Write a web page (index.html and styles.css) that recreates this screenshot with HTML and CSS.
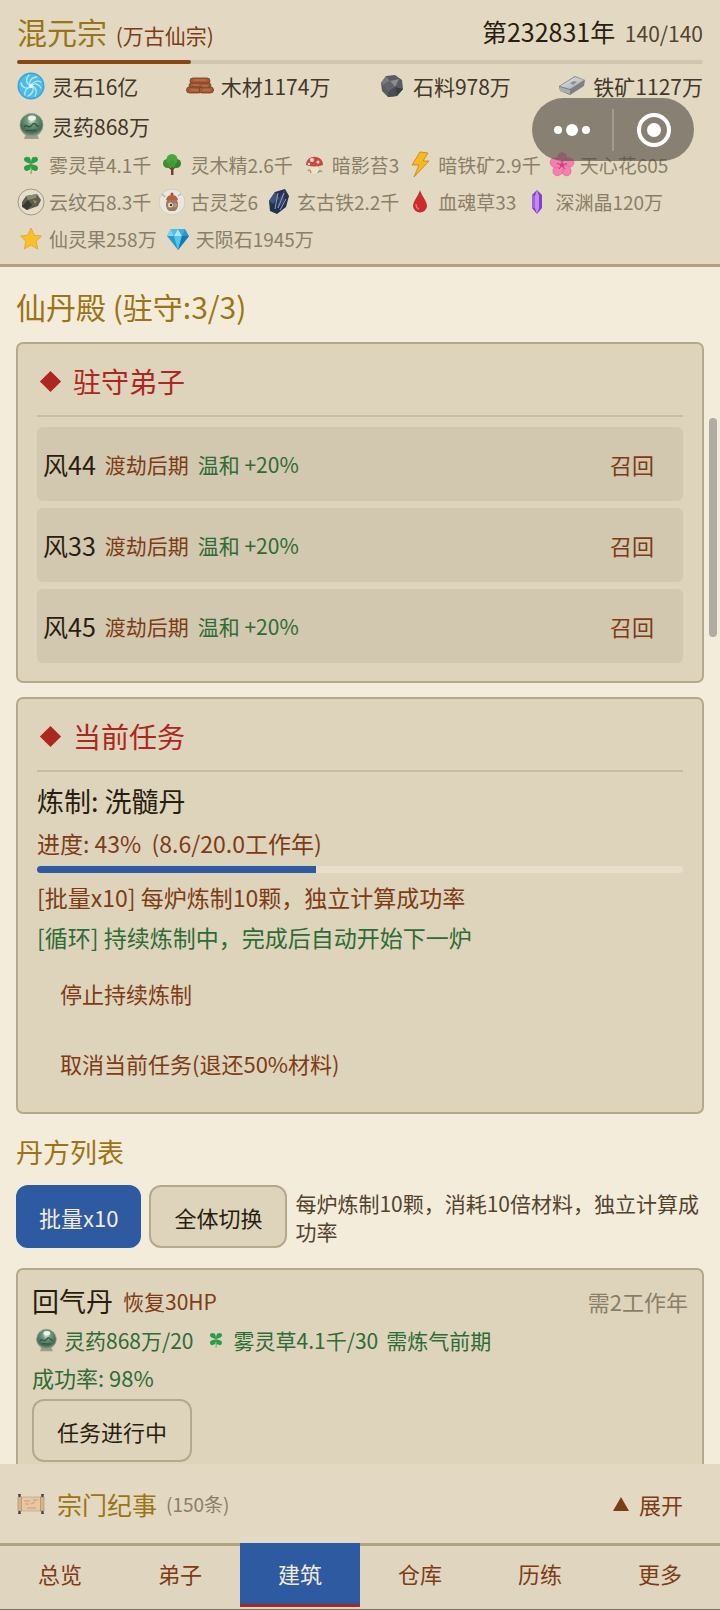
FILE: index.html
```html
<!DOCTYPE html>
<html lang="zh-CN">
  <head>
    <meta charset="UTF-8" />
    <meta name="viewport" content="width=device-width, initial-scale=1.0" />
    <title>混元宗</title>
    <link rel="stylesheet" href="styles.css">
  </head>
  <body>
    <svg class="sprite" aria-hidden="true">
      <defs>
        <radialGradient id="orb" cx="0.5" cy="0.3" r="0.7">
          <stop offset="0" stop-color="#dff0df" />
          <stop offset="0.3" stop-color="#6f9a7c" />
          <stop offset="0.75" stop-color="#466b52" />
          <stop offset="1" stop-color="#94a394" />
        </radialGradient>
        <linearGradient id="metal" x1="0" y1="0" x2="1" y2="1">
          <stop offset="0" stop-color="#e4e5e8" />
          <stop offset="1" stop-color="#a5a8ad" />
        </linearGradient>
      </defs>
      <symbol id="i-spirit" viewBox="0 0 28 28">
        <circle cx="14" cy="14" r="13.5" fill="#3aa5d6" />
        <circle cx="14" cy="14" r="12" fill="#4fbce6" />
        <g fill="none" stroke="#b5e8f7" stroke-width="1.3" stroke-linecap="round">
          <path d="M14 14C11 11 14 5 20 5" />
          <path d="M14 14C17 10 22 12 24 16" />
          <path d="M14 14C18 16 16 22 11 24" />
          <path d="M14 14C11 18 5 16 4 11" />
          <path d="M14 14C9 12 8 7 12 3" />
          <path d="M14 14C18 14 21 19 18 24" />
          <path d="M14 14C10 15 7 20 8 23" />
          <path d="M14 14C15 10 20 8 24 10" />
        </g>
        <circle cx="14" cy="14" r="2" fill="#e9fbff" />
      </symbol>
      <symbol id="i-wood" viewBox="0 0 28 28">
        <g fill="#a65a36" stroke="#6f3a22" stroke-width="0.8">
          <rect x="4" y="6" width="20" height="6" rx="3" />
          <rect x="3" y="11" width="22" height="5" rx="2.5" />
          <rect x="0.5" y="15" width="15" height="6" rx="3" />
          <rect x="13" y="15" width="14.500" height="6" rx="3" />
        </g>
        <path d="M8 8h12M7 13h6M16 14h6M5 18h8M17 18h7" stroke="#c98256" stroke-width="0.9" />
      </symbol>
      <symbol id="i-stone" viewBox="0 0 28 28">
        <path d="M8 4L17 3L24 8L25 17L19 24L10 25L4 19L3 11Z" fill="#5a5c60" />
        <path d="M8 4L12 9L5 13L3 11Z" fill="#77797d" />
        <path d="M12 9L21 7L17 15Z" fill="#8b8d91" />
        <path d="M17 15L25 17L19 24Z" fill="#3a3c40" />
        <path d="M5 13L12 9L17 15L10 20Z" fill="#626468" />
        <path d="M10 20L17 15L19 24L10 25Z" fill="#4a4c51" />
      </symbol>
      <symbol id="i-iron" viewBox="0 0 28 28">
        <path d="M1 14L17 4L27 8L26 14L12 23L2 19Z" fill="#7c7f84" />
        <path d="M2 14L17 5L26 8L12 17Z" fill="url(#metal)" />
        <path d="M2 15L12 18V22L2 19Z" fill="#a9acb0" />
        <path d="M12 11l4-2 3 1-4 3z" fill="#8b8e92" />
      </symbol>
      <symbol id="i-herb" viewBox="0 0 28 28">
        <path d="M9 22h11l2 5H7z" fill="#a69b86" />
        <circle cx="14.500" cy="13" r="11.500" fill="url(#orb)" stroke="#8b9a8a" stroke-width="0.8" />
        <path d="M7 15c3-4 5 3 8-2s4 3 7 1M9 19c4-2 6 1 10-1" fill="none" stroke="#315641" stroke-width="1.4" />
        <ellipse cx="15" cy="6" rx="4" ry="2.500" fill="#eaf6ea" />
      </symbol>
      <symbol id="i-clover" viewBox="0 0 28 28">
        <path d="M14 14q1 5 0 9" stroke="#8bb56a" stroke-width="1.5" fill="none" />
        <g fill="#2a9d48">
          <path d="M14 13C11 12 7 11 7 8.500S10 5 11 6.500C12.500 5 14 8 14 13z" />
          <path d="M14 13C14 8 15.500 5 17 6.500C18 5 21 6 21 8.500S17 12 14 13z" />
          <path d="M14 13C11 14 7 14 7 17s3 4 4.500 2C13 20 14 17 14 13z" />
          <path d="M14 13C17 14 21 14 21 17s-3 4-4.500 2C15 20 14 17 14 13z" />
        </g>
      </symbol>
      <symbol id="i-tree" viewBox="0 0 28 28">
        <path d="M13 13h2.500v11h-2.500z" fill="#6d4526" />
        <path d="M14 19l-4-4M15 18l4-4" stroke="#6d4526" stroke-width="1.5" />
        <circle cx="9.500" cy="12.500" r="4.500" fill="#3c8f35" />
        <circle cx="18.500" cy="12.500" r="4.500" fill="#36832f" />
        <circle cx="14" cy="8.500" r="5.500" fill="#4ba53e" />
        <circle cx="14" cy="13" r="3.500" fill="#419a38" />
      </symbol>
      <symbol id="i-mushroom" viewBox="0 0 28 28">
        <path d="M11 13h7l1 8q-4 3-9 0z" fill="#eee2cf" />
        <path d="M8 20q2-3 3 2M18 22q2-4 4-1" stroke="#84a66b" stroke-width="1.4" fill="none" />
        <path d="M6 14C6 3 23 3 23 14Q15 17 6 14z" fill="#d0453b" />
        <circle cx="12" cy="9" r="2" fill="#fff3e9" />
        <circle cx="18" cy="11" r="1.500" fill="#fff3e9" />
        <circle cx="9" cy="13" r="1.200" fill="#fff3e9" />
      </symbol>
      <symbol id="i-bolt" viewBox="0 0 28 28">
        <path d="M14 1L22 2L17 10H23L8 26L13 14H6Z" fill="#f7b91c" stroke="#c98a1b" stroke-width="0.9" stroke-linejoin="round" />
      </symbol>
      <symbol id="i-flower" viewBox="0 0 28 28">
        <g fill="#f67fb0" stroke="#dc5f92" stroke-width="0.6">
          <ellipse cx="14" cy="7.500" rx="4.800" ry="5.800" />
          <ellipse cx="14" cy="7.500" rx="4.800" ry="5.800" transform="rotate(72 14 14)" />
          <ellipse cx="14" cy="7.500" rx="4.800" ry="5.800" transform="rotate(144 14 14)" />
          <ellipse cx="14" cy="7.500" rx="4.800" ry="5.800" transform="rotate(216 14 14)" />
          <ellipse cx="14" cy="7.500" rx="4.800" ry="5.800" transform="rotate(288 14 14)" />
        </g>
        <path d="M14 14V9M14 14l5-1.500M14 14l3 4M14 14l-3 4M14 14l-5-1.500" stroke="#b93872" stroke-width="1" />
        <circle cx="14" cy="14" r="2" fill="#c94580" />
      </symbol>
      <symbol id="i-ore" viewBox="0 0 28 28">
        <circle cx="14" cy="14" r="13" fill="#e6decb" stroke="#a39a88" stroke-width="1" />
        <path d="M5 14L9 8L20 6L24 12L21 18L10 22L5 19Z" fill="#5d5c4d" />
        <path d="M9 8L20 6L19 10L11 12Z" fill="#8c8a70" />
        <path d="M11 12L15 17L10 22L5 18Z" fill="#38382f" />
        <path d="M16 12l4 1-2 3z" fill="#a39453" />
      </symbol>
      <symbol id="i-jar" viewBox="0 0 28 28">
        <circle cx="14" cy="14" r="13" fill="#e9e6de" stroke="#d3cbb9" stroke-width="1" />
        <path d="M7 9L4 6M20 8l3-2" stroke="#9db8c8" stroke-width="1.500" />
        <path d="M9 12h10q3 7-2 11h-6q-5-4-2-11z" fill="#9c7a62" />
        <path d="M8 12q1-5 6-5t6 5z" fill="#b95d43" />
        <circle cx="14" cy="6" r="1.500" fill="#a44b38" />
        <circle cx="12.500" cy="17" r="2.500" fill="#f0dfca" />
        <circle cx="17" cy="17" r="1.500" fill="#f0dfca" />
        <circle cx="13" cy="17" r="1.200" fill="#4d2e23" />
        <circle cx="17" cy="17" r="0.800" fill="#4d2e23" />
      </symbol>
      <symbol id="i-darkiron" viewBox="0 0 28 28">
        <path d="M10 4L20 1L24 8L21 19L12 26L5 23L4 13Z" fill="#25304d" />
        <path d="M10 4L14 10L8 16L4 13Z" fill="#41527d" />
        <path d="M14 10L20 1L19 14L12 21Z" fill="#354570" />
        <path d="M13 5L10 21M19 5L13 20M21 11L15 22" stroke="#8aa0cc" stroke-width="1" />
      </symbol>
      <symbol id="i-blood" viewBox="0 0 28 28">
        <path d="M14 2C16 9 21 13 21 18a7 6.500 0 0 1-14 0C7 13 12 9 14 2z" fill="#cb2b2b" />
        <path d="M10 16q0 4 3 5" stroke="#e67671" stroke-width="1.500" fill="none" />
      </symbol>
      <symbol id="i-crystal" viewBox="0 0 28 28">
        <path d="M14 2L19 7V20L14 26L9 20V7Z" fill="#8440c9" />
        <path d="M14 2L16 8V20L14 26L12 20V8Z" fill="#c08bf0" />
        <path d="M9 7L12 8V20L9 20Z" fill="#a25fe0" />
      </symbol>
      <symbol id="i-star" viewBox="0 0 28 28">
        <path d="M14 3L17.200 10.200L24.500 11L19.200 16.200L20.700 24L14 20L7.300 24L8.800 16.200L3.500 11L10.800 10.200Z" fill="#f8c12c" stroke="#dfa12c" stroke-width="0.8" stroke-linejoin="round" />
      </symbol>
      <symbol id="i-diamond" viewBox="0 0 28 28">
        <path d="M7 4H21L25 11L14 25L3 11Z" fill="#279bd0" />
        <path d="M7 4L10 11H3Z" fill="#7cd5f2" />
        <path d="M7 4H14L10 11Z" fill="#4fbfe8" />
        <path d="M14 4L18 11H10Z" fill="#a9e8fa" />
        <path d="M21 4L18 11L14 4Z" fill="#42afdc" />
        <path d="M10 11H18L14 25Z" fill="#58c5ea" />
        <path d="M18 11H25L14 25Z" fill="#1878b0" />
      </symbol>
      <symbol id="i-scroll" viewBox="0 0 28 28">
        <rect x="3" y="7" width="22" height="14" fill="#e6c9a4" stroke="#b99a75" stroke-width="0.6" />
        <rect x="1" y="7" width="3.500" height="14" fill="#d6b48c" stroke="#9a7d5c" stroke-width="0.5" />
        <rect x="23.500" y="7" width="3.500" height="14" fill="#d6b48c" stroke="#9a7d5c" stroke-width="0.5" />
        <path d="M1 4h3l-0.500 3h-2zM1 24h3l-0.500-3h-2zM24 4h3l-0.500 3h-2zM24 24h3l-0.500-3h-2z" fill="#4c4a48" />
        <path d="M7 11h6M16 10h5M8 14h4M14 14l4-2M10 18h9" stroke="#c79c76" stroke-width="1" />
      </symbol>
    </svg>

    <header class="top">
      <div class="top-row">
        <h1 class="sect">混元宗 <span class="sect-rank">(万古仙宗)</span></h1>
        <div class="year">第232831年 <span class="people">140/140</span></div>
      </div>
      <div class="year-bar"><div class="year-fill"></div></div>
      <ul class="res">
        <li><svg class="icon"><use href="#i-spirit" /></svg>灵石16亿</li>
        <li><svg class="icon"><use href="#i-wood" /></svg>木材1174万</li>
        <li><svg class="icon"><use href="#i-stone" /></svg>石料978万</li>
        <li><svg class="icon"><use href="#i-iron" /></svg>铁矿1127万</li>
        <li><svg class="icon"><use href="#i-herb" /></svg>灵药868万</li>
      </ul>
      <ul class="res res-small">
        <li><svg class="icon"><use href="#i-clover" /></svg>雾灵草4.1千</li>
        <li><svg class="icon"><use href="#i-tree" /></svg>灵木精2.6千</li>
        <li><svg class="icon"><use href="#i-mushroom" /></svg>暗影苔3</li>
        <li><svg class="icon"><use href="#i-bolt" /></svg>暗铁矿2.9千</li>
        <li><svg class="icon"><use href="#i-flower" /></svg>天心花605</li>
        <li><svg class="icon"><use href="#i-ore" /></svg>云纹石8.3千</li>
        <li><svg class="icon"><use href="#i-jar" /></svg>古灵芝6</li>
        <li><svg class="icon"><use href="#i-darkiron" /></svg>玄古铁2.2千</li>
        <li><svg class="icon"><use href="#i-blood" /></svg>血魂草33</li>
        <li><svg class="icon"><use href="#i-crystal" /></svg>深渊晶120万</li>
        <li><svg class="icon"><use href="#i-star" /></svg>仙灵果258万</li>
        <li><svg class="icon"><use href="#i-diamond" /></svg>天陨石1945万</li>
      </ul>
    </header>

    <div class="capsule">
      <button type="button" aria-label="菜单">
        <svg width="36" height="14" viewBox="0 0 36 14" fill="#fff">
          <circle cx="4" cy="7" r="4" />
          <circle cx="18" cy="7" r="6" />
          <circle cx="32" cy="7" r="4" />
        </svg>
      </button>
      <button type="button" aria-label="关闭">
        <svg width="36" height="36" viewBox="0 0 36 36">
          <circle cx="18" cy="18" r="15" fill="none" stroke="#fff" stroke-width="4" />
          <circle cx="18" cy="18" r="7" fill="#fff" />
        </svg>
      </button>
    </div>

    <main class="page">
      <h2 class="page-title">仙丹殿 (驻守:3/3)</h2>

      <section class="card">
        <h3 class="card-title">驻守弟子</h3>
        <ul class="disciples">
          <li>
            <span class="name">风44</span>
            <span class="realm">渡劫后期</span>
            <span class="good">温和 +20%</span>
            <button type="button" class="recall">召回</button>
          </li>
          <li>
            <span class="name">风33</span>
            <span class="realm">渡劫后期</span>
            <span class="good">温和 +20%</span>
            <button type="button" class="recall">召回</button>
          </li>
          <li>
            <span class="name">风45</span>
            <span class="realm">渡劫后期</span>
            <span class="good">温和 +20%</span>
            <button type="button" class="recall">召回</button>
          </li>
        </ul>
      </section>

      <section class="card">
        <h3 class="card-title">当前任务</h3>
        <p class="task-name">炼制: 洗髓丹</p>
        <p class="task-progress">进度: 43%&nbsp; (8.6/20.0工作年)</p>
        <div class="task-bar"><div class="task-fill" style="width: 43.2%"></div></div>
        <p class="task-note">[批量x10] 每炉炼制10颗，独立计算成功率</p>
        <p class="task-note good">[循环] 持续炼制中，完成后自动开始下一炉</p>
        <div class="task-actions">
          <button type="button" class="btn btn-text">停止持续炼制</button>
          <button type="button" class="btn btn-text">取消当前任务(退还50%材料)</button>
        </div>
      </section>

      <h3 class="list-title">丹方列表</h3>
      <div class="list-tools">
        <button type="button" class="btn btn-primary">批量x10</button>
        <button type="button" class="btn">全体切换</button>
        <p class="list-hint">每炉炼制10颗，消耗10倍材料，独立计算成功率</p>
      </div>

      <section class="card recipe">
        <div class="recipe-head">
          <h4 class="recipe-name">回气丹</h4>
          <span class="realm">恢复30HP</span>
          <span class="recipe-time">需2工作年</span>
        </div>
        <div class="recipe-cost good">
          <span><svg class="icon"><use href="#i-herb" /></svg>灵药868万/20</span>
          <span><svg class="icon"><use href="#i-clover" /></svg>雾灵草4.1千/30</span>
          <span>需炼气前期</span>
        </div>
        <p class="recipe-rate good">成功率: 98%</p>
        <button type="button" class="btn">任务进行中</button>
      </section>

      <section class="card recipe">
        <div class="recipe-head"></div>
      </section>

      <div class="scroll-thumb"></div>
    </main>

    <section class="log">
      <svg class="icon"><use href="#i-scroll" /></svg>
      <h2 class="log-title">宗门纪事</h2>
      <span class="log-count">(150条)</span>
      <button type="button" class="log-toggle"><span class="triangle"></span>展开</button>
    </section>

    <nav class="tabs">
      <a href="#overview">总览</a>
      <a href="#disciples">弟子</a>
      <a href="#buildings" class="active">建筑</a>
      <a href="#storage">仓库</a>
      <a href="#explore">历练</a>
      <a href="#more">更多</a>
    </nav>
  </body>
</html>
```

FILE: styles.css
```css
* {
  box-sizing: border-box;
}
body {
  font-family: "Noto Sans CJK SC", sans-serif;
  font-size: 22px;
  display: flex;
  flex-direction: column;
  height: 100vh;
  margin: 0;
  background-color: #f4ecda;
  color: #2a1d10;
}
h1,
h2,
h3,
h4,
p,
ul {
  margin: 0;
  padding: 0;
  font-weight: normal;
}
ul {
  list-style: none;
}
button {
  font-family: inherit;
  font-size: 22px;
  color: #7d3c16;
  background: transparent;
  border: none;
  padding: 0;
  cursor: pointer;
}
.sprite {
  position: absolute;
  width: 0;
  height: 0;
}
.icon {
  width: 28px;
  height: 28px;
  flex: none;
}

/* header */
.top {
  background-color: #e3d9c2;
  border-bottom: 3px solid #b0a285;
  padding: 10px 17px 7px;
}
.top-row {
  display: flex;
  justify-content: space-between;
  line-height: 42px;
}
.sect {
  font-size: 30px;
  color: #9a7416;
}
.sect-rank {
  font-size: 21px;
  line-height: 1;
  color: #7d3c16;
  margin-left: 2px;
}
.year {
  font-size: 25px;
}
.people {
  font-size: 21px;
  line-height: 1;
  color: #52432f;
  margin-left: 4px;
}
.year-bar {
  height: 4px;
  margin: 8px 0 2px;
  border-radius: 2px;
  background-color: #d2c7ae;
}
.year-fill {
  width: 25.3%;
  height: 4px;
  border-radius: 2px;
  background-color: #8a4513;
}
.res {
  display: flex;
  flex-wrap: wrap;
  justify-content: space-between;
  column-gap: 16px;
  font-size: 21px;
  line-height: 40px;
  color: #43362a;
}
.res li {
  display: flex;
  align-items: center;
  gap: 7px;
}
.res-small {
  justify-content: flex-start;
  column-gap: 7px;
  font-size: 19px;
  line-height: 37px;
  color: #8b7e69;
}
.res-small li {
  gap: 4px;
}

/* floating menu over the header */
.capsule {
  position: fixed;
  top: 98px;
  right: 26px;
  width: 162px;
  height: 63px;
  border-radius: 32px;
  background-color: rgba(84, 79, 70, 0.64);
  display: flex;
  align-items: center;
  z-index: 5;
}
.capsule button {
  flex: 1;
  height: 42px;
  display: flex;
  align-items: center;
  justify-content: center;
}
.capsule button + button {
  border-left: 2px solid #a39c8e;
}

/* content */
.page {
  flex: 1;
  min-height: 0;
  overflow: hidden;
  position: relative;
  padding: 18px 16px 0;
}
.page-title {
  font-size: 30px;
  line-height: 42px;
  color: #9a7416;
  margin-bottom: 15px;
}
.card {
  background-color: #ded4bc;
  border: 2px solid #b5a88c;
  border-radius: 7px;
  padding: 18px 19px;
  margin-bottom: 14px;
}
.card-title {
  display: flex;
  align-items: center;
  gap: 15px;
  font-size: 28px;
  line-height: 38px;
  color: #ad261f;
  padding: 0 0 15px 6px;
  margin-bottom: 10px;
  border-bottom: 2px solid #c9bea4;
}
.card-title::before {
  content: "";
  width: 15px;
  height: 15px;
  background-color: #ad261f;
  transform: rotate(45deg);
}
.realm {
  font-size: 21px;
  color: #7d3c16;
}
.good {
  color: #2f6b35;
}
.disciples {
  display: flex;
  flex-direction: column;
  gap: 7px;
}
.disciples li {
  display: flex;
  align-items: center;
  gap: 9px;
  height: 74px;
  padding: 0 6px;
  border-radius: 6px;
  background-color: #d2c8af;
}
.disciples .name {
  font-size: 25px;
}
.disciples .good {
  font-size: 21px;
}
.recall {
  margin-left: auto;
  padding: 15px 23px;
}

.task-name {
  font-size: 27px;
  line-height: 38px;
}
.task-progress {
  font-size: 23px;
  line-height: 38px;
  color: #7d3c16;
  margin: 4px 0;
}
.task-bar {
  height: 7px;
  border-radius: 4px;
  background-color: #e8dfcb;
  overflow: hidden;
  margin-bottom: 4px;
}
.task-fill {
  height: 7px;
  background-color: #2d5aa0;
}
.task-note {
  font-size: 23px;
  line-height: 40px;
}
.task-note:not(.good) {
  color: #7d3c16;
}
.task-actions {
  display: flex;
  flex-direction: column;
  align-items: flex-start;
  gap: 7px;
  margin-top: 4px;
}
.btn {
  height: 63px;
  padding: 0 23px;
  color: #2a1d10;
  background-color: #ded4bc;
  border: 2px solid #b5a88c;
  border-radius: 12px;
  white-space: nowrap;
}
.btn-text {
  padding: 0 21px;
  color: #7d3c16;
  border-color: transparent;
}
.btn-primary {
  padding: 0 21px;
  color: #f4ecda;
  background-color: #2d5aa0;
  border-color: #2d5aa0;
}

.list-title {
  font-size: 27px;
  line-height: 40px;
  color: #9a7416;
  margin: 18px 0 13px;
}
.list-tools {
  display: flex;
  align-items: center;
  gap: 8px;
  margin-bottom: 20px;
}
.list-hint {
  flex: 1;
  font-size: 21px;
  line-height: 28px;
  color: #52432f;
}

.recipe {
  padding: 12px 14px;
}
.recipe-head {
  display: flex;
  align-items: center;
  gap: 10px;
  line-height: 38px;
}
.recipe-name {
  font-size: 27px;
}
.recipe-time {
  margin-left: auto;
  color: #8b7e69;
}
.recipe-cost {
  display: flex;
  gap: 8px;
  font-size: 21px;
  line-height: 40px;
}
.recipe-cost span {
  display: flex;
  align-items: center;
  gap: 4px;
}
.recipe-cost .icon {
  height: 24px;
}
.recipe-rate {
  line-height: 34px;
  margin-bottom: 5px;
}

/* scrollbar handle drawn over the content edge */
.scroll-thumb {
  position: absolute;
  top: 151px;
  right: 3px;
  width: 8px;
  height: 219px;
  border-radius: 4px;
  background-color: #b0aba3;
}

/* log strip and tabs */
.log {
  display: flex;
  align-items: center;
  height: 79px;
  padding: 0 17px;
  background-color: #e3d9c2;
}
.log-title {
  font-size: 25px;
  color: #9a7416;
  margin: 0 9px 0 12px;
}
.log-count {
  font-size: 19px;
  color: #8b7e69;
}
.log-toggle {
  display: flex;
  align-items: center;
  gap: 10px;
  margin-left: auto;
  padding: 16px 20px;
}
.triangle {
  border-left: 8px solid transparent;
  border-right: 8px solid transparent;
  border-bottom: 14px solid #7d3c16;
}
.tabs {
  display: flex;
  background-color: #e0d6bf;
  border-top: 3px solid #b0a285;
  border-bottom: 1px solid #77705f;
  padding-bottom: 2px;
}
.tabs a {
  flex: 1;
  height: 61px;
  line-height: 54px;
  text-align: center;
  color: #7d3c16;
  text-decoration: none;
}
.tabs .active {
  height: 64px;
  line-height: 60px;
  margin-top: -3px;
  color: #f4ecda;
  background-color: #2d5aa0;
  border-bottom: 3px solid #a8282a;
}
```
